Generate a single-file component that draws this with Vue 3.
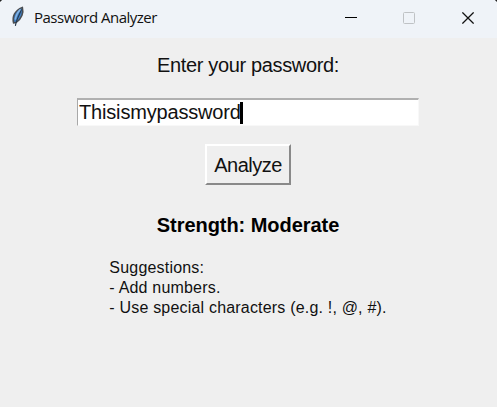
<script setup>
import { ref } from 'vue'

const password = ref('Thisismypassword')
const suggestions = ['Add numbers.', 'Use special characters (e.g. !, @, #).']
</script>

<template>
  <div class="window">
    <header class="titlebar">
      <svg class="feather" width="14" height="22" viewBox="0 0 14 22">
        <path d="M2.6 17C1 11 3.4 4.6 11.4 1.4 12.8 6.6 10.8 13 5 16.6Z" fill="#3f7fc4" stroke="#4a4d52" stroke-width="1.5" />
        <path d="M9.6 3.4C6 6.6 4.8 10.4 4.2 13.6" fill="none" stroke="#86b4e4" stroke-width="1.5" />
        <path d="M10.6 3.4C8.6 8.6 5.4 13 4.4 19.8" fill="none" stroke="#26384c" stroke-width="1.1" />
      </svg>
      <span class="title">Password Analyzer</span>
      <div class="controls">
        <svg class="minimize" width="12" height="12" viewBox="0 0 12 12"><path d="M0 5.5H12" stroke="#000" /></svg>
        <svg width="12" height="12" viewBox="0 0 12 12"><rect x=".5" y=".5" width="11" height="11" rx="1" fill="none" stroke="#bfc2c5" /></svg>
        <svg width="12" height="12" viewBox="0 0 12 12"><path d="M.4.4 11.6 11.6M11.6.4.4 11.6" stroke="#111" stroke-width="1.25" /></svg>
      </div>
      <i class="corner left"></i>
      <i class="corner right"></i>
    </header>
    <main class="body">
      <div class="prompt">Enter your password:</div>
      <div class="entry"><span class="value">{{ password }}</span><i class="caret"></i></div>
      <button class="analyze"><span>Analyze</span></button>
      <div class="strength">Strength: Moderate</div>
      <div class="suggestions">
        <div>Suggestions:</div>
        <div v-for="s in suggestions" :key="s">- {{ s }}</div>
      </div>
    </main>
  </div>
</template>

<style>
body { background: #efefef; overflow: hidden; }
</style>

<style scoped>
.window {
  width: 497px;
  height: 407px;
  background: #efefef;
  color: #111;
  font-family: "Liberation Sans", Arial, sans-serif;
}
.titlebar {
  position: relative;
  display: flex;
  align-items: flex-start;
  height: 38px;
  box-sizing: border-box;
  padding: 0 23px 0 11px;
  background: #eff3f8;
  overflow: hidden;
}
.feather { margin-top: 6px; }
.title {
  margin: 7px 0 0 9px;
  font: 15px/20px "Open Sans", "Noto Sans", sans-serif;
  letter-spacing: -0.5px;
  white-space: nowrap;
}
.controls { display: flex; gap: 47px; margin: 12px 0 0 auto; }
.controls svg { display: block; }
.controls .minimize { margin-right: -1px; }
.corner { position: absolute; top: -2px; width: 5px; height: 3px; background: #222; }
.left { left: -2px; transform: rotate(-45deg); }
.right { right: -2px; transform: rotate(45deg); }
.body {
  display: flex;
  flex-direction: column;
  align-items: center;
  padding-right: 1px;
  white-space: nowrap;
}
.prompt { margin-top: 15px; font-size: 20px; line-height: 24px; letter-spacing: -0.34px; }
.entry {
  display: flex;
  align-items: center;
  box-sizing: border-box;
  width: 342px;
  height: 28px;
  margin-top: 21px;
  background: #fff;
  border: 1px solid #f8f8f8;
  border-top: 2px solid #b0b0b0;
  border-left: 1px solid #a8a8a8;
}
.value { padding-left: 1px; font-size: 20px; line-height: 24px; letter-spacing: -0.17px; margin-top: -1px; }
.caret { width: 3px; height: 22px; margin-left: -1px; background: #000; }
.analyze {
  box-sizing: border-box;
  width: 86px;
  height: 41px;
  margin-top: 18px;
  padding: 0;
  border: 2px solid;
  border-color: #fff #898989 #898989 #fff;
  background: #efefef;
  color: #111;
  font: 20px/24px "Liberation Sans", Arial, sans-serif;
  letter-spacing: -0.5px;
}
.strength {
  margin-top: 28px;
  font-size: 20px;
  font-weight: bold;
  line-height: 24px;
  letter-spacing: -0.05px;
  color: #000;
}
.suggestions { margin-top: 21px; font-size: 16px; line-height: 20px; letter-spacing: 0.19px; }
</style>
